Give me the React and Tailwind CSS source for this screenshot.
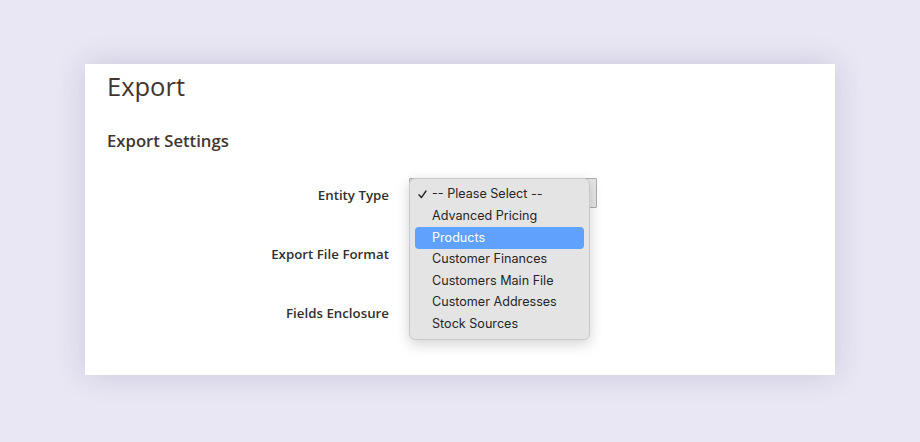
import React from 'react';

const options = [
  '-- Please Select --',
  'Advanced Pricing',
  'Products',
  'Customer Finances',
  'Customers Main File',
  'Customer Addresses',
  'Stock Sources',
];

function Row({ label, children }) {
  return (
    <div className="flex items-center h-[30px]">
      <div className="w-[304px] text-right text-[13.3px] font-semibold text-[#303030]">{label}</div>
      <div className="ml-[20px] relative">{children}</div>
    </div>
  );
}

export default function App() {
  return (
    <div className="w-[920px] h-[442px] bg-[#e9e7f3] pt-[64px] pl-[85px] overflow-hidden" style={{ fontFamily: '"Open Sans", sans-serif' }}>
      <div className="w-[750px] h-[311px] bg-white shadow-[0_0_28px_rgba(60,50,120,0.18)] pl-[22px]">
        <h1 className="text-[25.5px] leading-[40px] pt-[2px] text-[#41362f] font-normal">Export</h1>
        <h2 className="mt-[23px] text-[16.7px] leading-[24px] font-semibold text-[#41362f]">Export Settings</h2>
        <div className="mt-[28px] -ml-[22px] flex flex-col gap-[29px]">
          <Row label="Entity Type">
            <div className="relative -top-[3px] w-[188px] h-[30px] border border-[#adadad] rounded-[1px] bg-[#e6e6e6]" />
            <div
              className="absolute left-0 -top-[3px] w-[181px] h-[162px] rounded-[6px] bg-[#e4e4e4] border border-[#c9c9c9] shadow-[0_4px_14px_rgba(0,0,0,0.18)] px-[5px] pt-[5px]"
              style={{ fontFamily: 'Inter, "Liberation Sans", sans-serif' }}
            >
              {options.map((o, i) => (
                <div
                  key={o}
                  className={`h-[21.6px] flex items-center text-[12.6px] rounded-[4px] ${i === 2 ? 'bg-[#5ea2fd] text-white' : 'text-[#262626]'}`}
                >
                  <span className="w-[17px] pl-[3px] flex items-center">
                    {i === 0 && (
                      <svg width="9" height="9" viewBox="0 0 9 9" fill="none">
                        <path d="M1 4.8 L3.4 7.6 L8 1" stroke="#262626" strokeWidth="1.4" strokeLinecap="round" strokeLinejoin="round" />
                      </svg>
                    )}
                  </span>
                  <span>{o}</span>
                </div>
              ))}
            </div>
          </Row>
          <Row label="Export File Format">
            <div className="w-[188px] h-[30px]" />
          </Row>
          <Row label="Fields Enclosure">
            <div className="w-[188px] h-[30px]" />
          </Row>
        </div>
      </div>
    </div>
  );
}
